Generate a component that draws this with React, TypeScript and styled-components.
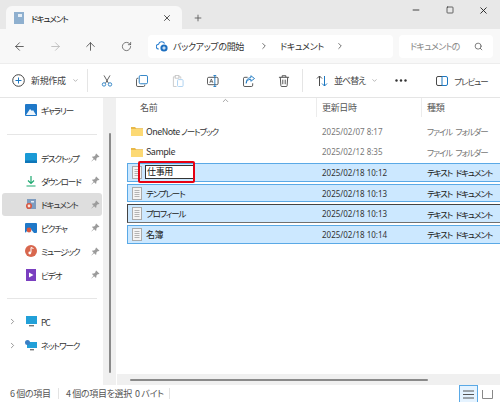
import React from 'react';
import styled, { createGlobalStyle, css } from 'styled-components';
import { ArrowLeft, ArrowRight, ArrowUp, RotateCw, X, Plus, Minus, Square, ChevronRight, ChevronDown, ChevronUp, Search } from 'lucide-react';

const GlobalStyle = createGlobalStyle`
  html, body { margin: 0; padding: 0; width: 500px; height: 402px; overflow: hidden; background: #fff; }
  body {
    font-family: "Noto Sans CJK JP", "Noto Sans", sans-serif;
    font-feature-settings: "palt";
    letter-spacing: -0.35px;
    font-size: 9px;
    color: #333;
    white-space: nowrap;
  }
  * { box-sizing: border-box; }
`;

// katakana in the reference is much narrower than in Noto
const narrow = css`
  font-size: 8.5px;
  letter-spacing: -1.1px;
  word-spacing: 2.5px;
`;

const Window = styled.div`
  width: 500px;
  height: 402px;
  display: flex;
  flex-direction: column;
  background: #fff;
`;

const TabBar = styled.div`
  height: 29px;
  background: #e8e8e8;
  padding: 6px 0 0 6px;
  display: flex;
  align-items: stretch;
  flex-shrink: 0;
`;

const Tab = styled.div`
  width: 176px;
  background: #f8f8f8;
  border-radius: 6px 6px 0 0;
  display: flex;
  align-items: center;
  padding: 0 10px 0 8px;
  color: #222;
`;

const TabIcon = styled.svg`
  width: 10px;
  height: 12px;
  margin-right: 7px;
`;

const TabTitle = styled.span`
  flex: 1;
  ${narrow}
`;

const NewTab = styled.div`
  width: 32px;
  display: flex;
  align-items: center;
  justify-content: center;
  color: #555;
`;

const WindowButtons = styled.div`
  margin-left: auto;
  display: flex;
  align-items: flex-start;
  margin-top: -6px;
`;

const WindowButton = styled.div`
  width: 33.5px;
  height: 20px;
  display: flex;
  align-items: center;
  justify-content: center;
  color: #222;
`;

const AddressRow = styled.div`
  height: 35px;
  background: #f8f8f8;
  display: flex;
  align-items: center;
  padding: 0 7px 0 2px;
  border-bottom: 1px solid #ededed;
  flex-shrink: 0;
`;

const NavButton = styled.div<{ $off?: boolean }>`
  width: 35.5px;
  display: flex;
  justify-content: center;
  color: ${({ $off }) => ($off ? '#b5b5b5' : '#444')};
`;

const AddressBox = styled.div`
  width: 245px;
  height: 23px;
  margin-left: 4px;
  background: #fff;
  border-radius: 4px;
  display: flex;
  align-items: center;
  padding-left: 8px;
  color: #333;
`;

const Crumb = styled.span<{ $left: number; $width: number }>`
  margin-left: ${({ $left }) => $left}px;
  width: ${({ $width }) => $width}px;
`;

const Sep = styled.span`
  display: flex;
  width: 10px;
  margin-left: 6px;
  color: #555;
`;

const SearchBox = styled.div`
  width: 94px;
  height: 23px;
  margin-left: 6px;
  background: #fff;
  border-radius: 4px;
  display: flex;
  align-items: center;
  justify-content: space-between;
  padding: 0 10px 0 11px;
  color: #888;
  letter-spacing: -0.7px;
`;

const Toolbar = styled.div`
  height: 34px;
  display: flex;
  align-items: center;
  border-bottom: 1px solid #e5e5e5;
  padding-left: 12px;
  color: #444;
  flex-shrink: 0;
`;

const NewButton = styled.div`
  width: 75px;
  display: flex;
  align-items: center;
  gap: 6px;
`;

const ToolText = styled.div<{ $left?: number }>`
  display: flex;
  align-items: center;
  gap: 6px;
  margin-left: ${({ $left }) => $left ?? 0}px;
`;

const SortLabel = styled.span`
  letter-spacing: -1px;
`;

const PreviewLabel = styled.span`
  ${narrow}
`;

const Divider = styled.div<{ $right?: number }>`
  width: 1px;
  height: 23px;
  background: #e5e5e5;
  margin-right: ${({ $right }) => $right ?? 0}px;
`;

const ToolIcon = styled.div`
  width: 35.5px;
  display: flex;
  justify-content: center;
  svg {
    width: 12px;
    height: 12px;
  }
`;

const Main = styled.div`
  flex: 1;
  display: flex;
  min-height: 0;
`;

const Sidebar = styled.div`
  width: 103px;
  padding: 0.5px 0 0 2px;
  display: flex;
  flex-direction: column;
  flex-shrink: 0;
`;

const NavItem = styled.div<{ $active?: boolean }>`
  height: 23.4px;
  flex-shrink: 0;
  display: flex;
  align-items: center;
  padding-left: 23px;
  margin-right: 1px;
  border-radius: 3px;
  background: ${({ $active }) => ($active ? '#dedede' : 'transparent')};
  color: #333;
`;

const NavIcon = styled.span`
  width: 12px;
  display: flex;
  justify-content: center;
`;

const NavLabel = styled.span`
  flex: 1;
  margin-left: 4px;
  ${narrow}
`;

const NavPin = styled.span`
  display: flex;
  margin-right: 2px;
`;

const NavChevron = styled.span`
  display: flex;
  width: 9px;
  margin: 0 8.5px 0 -17.5px;
  color: #777;
`;

const NavRule = styled.div<{ $top: number; $bottom: number }>`
  height: 1px;
  background: #e6e6e6;
  flex-shrink: 0;
  margin: ${({ $top }) => $top}px 6px ${({ $bottom }) => $bottom}px 5px;
`;

const NavTrack = styled.div`
  width: 13px;
  background: #f0f0f0;
  display: flex;
  justify-content: center;
  padding: 35px 0 12px;
  flex-shrink: 0;
`;

const NavThumb = styled.div`
  width: 2px;
  background: #8a8a8a;
  border-radius: 1px;
`;

const Content = styled.div`
  flex: 1;
  display: flex;
  flex-direction: column;
  min-width: 0;
  position: relative;
  padding-left: 11px;
`;

const HeaderRow = styled.div`
  height: 24px;
  display: flex;
  align-items: flex-start;
  color: #555;
  flex-shrink: 0;
`;

const HeaderCell = styled.div<{ $w: number; $pad: number; $last?: boolean }>`
  width: ${({ $w }) => $w}px;
  height: 19px;
  display: flex;
  align-items: center;
  padding-left: ${({ $pad }) => $pad}px;
  border-right: 1px solid ${({ $last }) => ($last ? 'transparent' : '#ececec')};
`;

const SortCaret = styled.div`
  position: absolute;
  top: -2px;
  left: 105px;
  color: #888;
  display: flex;
`;

const FileRow = styled.div<{ $sel?: boolean; $focus?: boolean }>`
  height: 18.6px;
  margin-bottom: 2px;
  flex-shrink: 0;
  display: flex;
  align-items: center;
  color: ${({ $sel }) => ($sel ? '#222' : '#333')};
  background: ${({ $sel }) => ($sel ? '#cce8ff' : 'transparent')};
  border: 1px solid ${({ $sel, $focus }) => ($focus ? '#444' : $sel ? '#5aa9e6' : 'transparent')};
  border-bottom-width: 1.5px;
  border-bottom-color: ${({ $sel, $focus }) => ($focus ? '#707070' : $sel ? '#5aa9e6' : 'transparent')};
  border-right: none;
`;

const NameCell = styled.div`
  width: 194px;
  display: flex;
  align-items: center;
  padding-left: 3px;
  gap: 3px;
`;

const FileName = styled.span`
  letter-spacing: -0.5px;
`;

const Kana = styled.span`
  ${narrow}
`;

const DateCell = styled.div<{ $dim?: boolean }>`
  width: 105px;
  font-size: 8px;
  letter-spacing: 0;
  font-family: "Noto Sans", sans-serif;
  color: ${({ $dim }) => ($dim ? '#777' : '#333')};
`;

const KindCell = styled.div<{ $dim?: boolean }>`
  ${narrow}
  color: ${({ $dim }) => ($dim ? '#777' : '#222')};
`;

const RenameBox = styled.div`
  width: 49px;
  height: 14px;
  margin-left: -1px;
  background: #fff;
  border: 1px solid #333;
  padding-left: 1px;
  line-height: 12px;
  color: #111;
`;

const Highlight = styled.div`
  position: absolute;
  top: 63px;
  left: 22px;
  width: 57px;
  height: 22px;
  border: 2.5px solid #e60012;
  border-radius: 2px;
`;

const HScroll = styled.div`
  margin-top: auto;
  height: 11px;
  margin-left: -10px;
  background: #f0f0f0;
  display: flex;
  align-items: center;
  flex-shrink: 0;
`;

const HThumb = styled.div`
  width: 298px;
  height: 2px;
  margin-left: 13px;
  background: #8a8a8a;
  border-radius: 1px;
`;

const StatusBar = styled.div`
  height: 17px;
  display: flex;
  align-items: center;
  padding-left: 10px;
  color: #555;
  flex-shrink: 0;
`;

const StatusRule = styled.div<{ $left: number; $right: number }>`
  width: 1px;
  height: 11px;
  background: #e3e3e3;
  margin: 0 ${({ $right }) => $right}px 0 ${({ $left }) => $left}px;
`;

const StatusText = styled.span<{ $width: number }>`
  width: ${({ $width }) => $width}px;
`;

const ViewButtons = styled.div`
  margin-left: auto;
  display: flex;
  align-items: center;
  height: 100%;
  padding-right: 3px;
`;

const ViewButton = styled.div<{ $on?: boolean }>`
  width: 19px;
  height: 100%;
  display: flex;
  align-items: center;
  justify-content: center;
  background: ${({ $on }) => ($on ? '#e5f3ff' : 'transparent')};
  border: 1px solid ${({ $on }) => ($on ? '#5aa9e6' : 'transparent')};
  border-bottom: none;
`;

const BLUE = '#1d78c1';
const GRAY = '#4a4a4a';

const FolderIcon = () => (
  <svg width="12" height="10" viewBox="0 0 12 10">
    <path d="M0 1h4l1.2 1.2H12V10H0z" fill="#e9b949" />
    <rect x="0" y="3" width="12" height="7" fill="#fcd974" />
  </svg>
);

const DocIcon = () => (
  <svg width="12" height="13" viewBox="0 0 12 13">
    <rect x="1.5" y="0.5" width="9" height="12" fill="#f4f4f4" stroke="#aaa" />
    <path d="M3.5 3.5h5M3.5 5.5h5M3.5 7.5h5M3.5 9.5h5" stroke="#b4b4b4" />
  </svg>
);

const PinIcon = () => (
  <svg width="9" height="9" viewBox="0 0 9 9">
    <path d="M5.2.5l3.3 3.3-1 .5-.6-.2-1.6 1.6.1 1.5-.7.6-1.6-1.6L.6 8.4l-.2-.2 2.2-2.5L1 4.1l.6-.7 1.5.1 1.6-1.6-.2-.6z" fill="#9b9b9b" />
  </svg>
);

const splitKana = (name: string) =>
  name.split(/([ァ-ヶー]+)/).map((part, i) => (i % 2 ? <Kana key={i}>{part}</Kana> : part));

const files = [
  { name: 'OneNote ノートブック', date: '2025/02/07 8:17', kind: 'ファイル フォルダー', folder: true },
  { name: 'Sample', date: '2025/02/12 8:35', kind: 'ファイル フォルダー', folder: true },
  { name: '仕事用', date: '2025/02/18 10:12', kind: 'テキスト ドキュメント', rename: true },
  { name: 'テンプレート', date: '2025/02/18 10:13', kind: 'テキスト ドキュメント' },
  { name: 'プロフィール', date: '2025/02/18 10:13', kind: 'テキスト ドキュメント', focus: true },
  { name: '名簿', date: '2025/02/18 10:14', kind: 'テキスト ドキュメント' },
];

const pinned: { label: string; icon: React.ReactNode; active?: boolean }[] = [
  {
    label: 'デスクトップ',
    icon: (
      <svg width="12" height="10" viewBox="0 0 12 10">
        <rect width="12" height="10" rx="1" fill="#1a9ad6" />
        <rect y="7.5" width="12" height="2.5" fill="#0f76b8" />
      </svg>
    ),
  },
  {
    label: 'ダウンロード',
    icon: (
      <svg width="12" height="12" viewBox="0 0 12 12" fill="none" stroke="#1fa971" strokeWidth="1.2">
        <path d="M6 1v7M3 5.5L6 8.5l3-3M1.5 11h9" />
      </svg>
    ),
  },
  {
    label: 'ドキュメント',
    active: true,
    icon: (
      <svg width="12" height="12" viewBox="0 0 12 12">
        <rect x="2" y="1" width="9" height="10" fill="#7e9cc0" />
        <circle cx="4" cy="8" r="3" fill="#d9573f" />
        <circle cx="4" cy="8" r="1.4" fill="#f4e4e0" />
        <rect x="6" y="3" width="3" height="1.5" fill="#e4edf6" />
      </svg>
    ),
  },
  {
    label: 'ピクチャ',
    icon: (
      <svg width="12" height="12" viewBox="0 0 12 12">
        <rect y="1" width="12" height="10" rx="1" fill="#1f78c8" />
        <path d="M0 11l5-5 4 5z" fill="#f2f6fa" />
        <circle cx="4" cy="8" r="2.4" fill="#d9573f" />
      </svg>
    ),
  },
  {
    label: 'ミュージック',
    icon: (
      <svg width="12" height="12" viewBox="0 0 12 12">
        <circle cx="6" cy="6" r="6" fill="#d8674e" />
        <path d="M6 2.5v5M6 2.5l2.5 1" stroke="#fff" fill="none" />
        <circle cx="4.8" cy="8" r="1.4" fill="#fff" />
      </svg>
    ),
  },
  {
    label: 'ビデオ',
    icon: (
      <svg width="10" height="12" viewBox="0 0 10 12">
        <rect width="10" height="12" fill="#7a3fc0" />
        <path d="M3 3.5l4.5 2.5L3 8.5z" fill="#fff" />
      </svg>
    ),
  },
];

export default function App() {
  return (
    <Window>
      <GlobalStyle />
      <TabBar>
        <Tab>
          <TabIcon viewBox="0 0 10 12">
            <rect width="10" height="12" fill="#8fb0cf" />
            <rect x="4" y="2" width="4" height="3" fill="#e5eef6" />
          </TabIcon>
          <TabTitle>ドキュメント</TabTitle>
          <X size={10} color="#333" />
        </Tab>
        <NewTab><Plus size={10} /></NewTab>
        <WindowButtons>
          <WindowButton><Minus size={10} /></WindowButton>
          <WindowButton><Square size={8} strokeWidth={2} /></WindowButton>
          <WindowButton><X size={11} /></WindowButton>
        </WindowButtons>
      </TabBar>
      <AddressRow>
        <NavButton><ArrowLeft size={13} strokeWidth={1.5} /></NavButton>
        <NavButton $off><ArrowRight size={13} strokeWidth={1.5} /></NavButton>
        <NavButton><ArrowUp size={13} strokeWidth={1.5} /></NavButton>
        <NavButton><RotateCw size={11} strokeWidth={1.5} /></NavButton>
        <AddressBox>
          <svg width="12" height="12" viewBox="0 0 12 12">
            <path d="M2.8 9a2.4 2.4 0 0 1-.2-4.8 3.2 3.2 0 0 1 6-.6" fill="none" stroke="#2a7fd0" strokeWidth="1.1" />
            <circle cx="8" cy="8" r="3.6" fill="#1d6fc0" />
            <path d="M8 6.3v3.4M6.3 8h3.4" stroke="#fff" />
          </svg>
          <Crumb $left={5} $width={80}>バックアップの開始</Crumb>
          <Sep><ChevronRight size={10} /></Sep>
          <Crumb $left={11} $width={49}>ドキュメント</Crumb>
          <Sep><ChevronRight size={10} /></Sep>
        </AddressBox>
        <SearchBox>
          <span>ドキュメントの</span>
          <Search size={9} color="#555" />
        </SearchBox>
      </AddressRow>
      <Toolbar>
        <NewButton>
          <svg width="13" height="13" viewBox="0 0 13 13" fill="none">
            <circle cx="6.5" cy="6.5" r="5.8" stroke="#444" />
            <path d="M6.5 3.5v6M3.5 6.5h6" stroke={BLUE} />
          </svg>
          <span>新規作成</span>
          <ChevronDown size={7} color="#888" />
        </NewButton>
        <Divider $right={1} />
        <ToolIcon>
          <svg viewBox="0 0 13 14" fill="none">
            <path d="M3 .5l5.2 9M10 .5L4.8 9.5" stroke={GRAY} />
            <circle cx="3" cy="11" r="2" stroke={BLUE} />
            <circle cx="10" cy="11" r="2" stroke={BLUE} />
          </svg>
        </ToolIcon>
        <ToolIcon>
          <svg viewBox="0 0 13 13" fill="none">
            <path d="M2.5 3.5H2A1.5 1.5 0 0 0 .5 5v6A1.5 1.5 0 0 0 2 12.5h6A1.5 1.5 0 0 0 9.5 11v-.5" stroke={GRAY} />
            <rect x="3.5" y="0.5" width="9" height="9" rx="1.5" stroke={BLUE} />
          </svg>
        </ToolIcon>
        <ToolIcon>
          <svg viewBox="0 0 13 13" fill="none">
            <path d="M4 2H1.5v10.5H5" stroke="#c8c8c8" />
            <path d="M7 2h2.5v2" stroke="#c8c8c8" />
            <rect x="3.5" y="0.5" width="4" height="3" stroke="#c8c8c8" />
            <rect x="6" y="5" width="6" height="7.5" rx="1" stroke="#a9cff0" />
          </svg>
        </ToolIcon>
        <ToolIcon>
          <svg viewBox="0 0 13 13" fill="none">
            <rect x="0.5" y="2.5" width="11.5" height="8" rx="1.5" stroke={GRAY} />
            <path d="M3 8.5l1.7-4.2 1.7 4.2M3.6 7.2h2.2" stroke={GRAY} strokeWidth="0.8" />
            <path d="M8.5 .5v12M7 .5h3M7 12.5h3" stroke={BLUE} />
          </svg>
        </ToolIcon>
        <ToolIcon>
          <svg viewBox="0 0 13 13" fill="none">
            <path d="M5 2.5H2A1.5 1.5 0 0 0 .5 4v7A1.5 1.5 0 0 0 2 12.5h7a1.5 1.5 0 0 0 1.5-1.5V9" stroke={GRAY} />
            <path d="M3.5 9c.3-2.8 2-4.3 5-4.3V6.8L12.5 3.8 8.5.8v2C5 3 3.5 5.5 3.5 9z" stroke={BLUE} />
          </svg>
        </ToolIcon>
        <ToolIcon>
          <svg viewBox="0 0 12 13" fill="none" stroke={GRAY}>
            <path d="M.5 2.5h11M4 2.5V.8h4v1.7M2 2.5l.6 9a1 1 0 0 0 1 1h4.8a1 1 0 0 0 1-1l.6-9M4.7 5v5M7.3 5v5" />
          </svg>
        </ToolIcon>
        <Divider $right={13} />
        <ToolText>
          <svg width="12" height="12" viewBox="0 0 12 12" fill="none">
            <path d="M3.5 11V1M1 3.5L3.5 1 6 3.5" stroke={GRAY} />
            <path d="M8.5 1v10M6 8.5L8.5 11 11 8.5" stroke={BLUE} />
          </svg>
          <SortLabel>並べ替え</SortLabel>
          <ChevronDown size={7} color="#888" />
        </ToolText>
        <ToolText $left={17}>
          <svg width="12" height="3" viewBox="0 0 12 3" fill="#333">
            <circle cx="1.5" cy="1.5" r="1.2" />
            <circle cx="6" cy="1.5" r="1.2" />
            <circle cx="10.5" cy="1.5" r="1.2" />
          </svg>
        </ToolText>
        <ToolText $left={29}>
          <svg width="12" height="10" viewBox="0 0 12 10" fill="none">
            <path d="M6 .5H2A1.5 1.5 0 0 0 .5 2v6A1.5 1.5 0 0 0 2 9.5h4" stroke={GRAY} />
            <path d="M6 .5h4A1.5 1.5 0 0 1 11.5 2v6A1.5 1.5 0 0 1 10 9.5H6z" stroke={BLUE} />
          </svg>
          <PreviewLabel>プレビュー</PreviewLabel>
        </ToolText>
      </Toolbar>
      <Main>
        <Sidebar>
          <NavItem>
            <NavIcon>
              <svg width="12" height="12" viewBox="0 0 12 12">
                <rect width="12" height="12" rx="1" fill="#1f78c8" />
                <path d="M1 11l4-6 2 2 1-1 3 5z" fill="#eef5fb" />
              </svg>
            </NavIcon>
            <NavLabel>ギャラリー</NavLabel>
          </NavItem>
          <NavRule $top={12} $bottom={11} />
          {pinned.map((item) => (
            <NavItem key={item.label} $active={item.active}>
              <NavIcon>{item.icon}</NavIcon>
              <NavLabel>{item.label}</NavLabel>
              <NavPin><PinIcon /></NavPin>
            </NavItem>
          ))}
          <NavRule $top={12} $bottom={11} />
          <NavItem>
            <NavChevron><ChevronRight size={9} /></NavChevron>
            <NavIcon>
              <svg width="11" height="11" viewBox="0 0 11 11">
                <rect width="11" height="8" fill="#22a0d8" />
                <rect x="3" y="9" width="5" height="1.4" fill="#777" />
              </svg>
            </NavIcon>
            <NavLabel>PC</NavLabel>
          </NavItem>
          <NavItem>
            <NavChevron><ChevronRight size={9} /></NavChevron>
            <NavIcon>
              <svg width="12" height="11" viewBox="0 0 12 11">
                <rect x="2" y="2" width="10" height="6" fill="#22a0d8" />
                <circle cx="2.5" cy="2.5" r="2.5" fill="#3b7fc4" />
                <rect x="5" y="9" width="4" height="1.4" fill="#777" />
              </svg>
            </NavIcon>
            <NavLabel>ネットワーク</NavLabel>
          </NavItem>
        </Sidebar>
        <NavTrack><NavThumb /></NavTrack>
        <Content>
          <HeaderRow>
            <HeaderCell $w={190} $pad={13}>名前</HeaderCell>
            <HeaderCell $w={105} $pad={5}>更新日時</HeaderCell>
            <HeaderCell $w={70} $pad={5} $last>種類</HeaderCell>
          </HeaderRow>
          <SortCaret><ChevronUp size={9} /></SortCaret>
          {files.map((f) => {
            const sel = !f.folder;
            return (
              <FileRow key={f.name} $sel={sel} $focus={f.focus}>
                <NameCell>
                  {f.folder ? <FolderIcon /> : <DocIcon />}
                  {f.rename ? <RenameBox>{f.name}</RenameBox> : <FileName>{splitKana(f.name)}</FileName>}
                </NameCell>
                <DateCell $dim={!sel}>{f.date}</DateCell>
                <KindCell $dim={!sel}>{f.kind}</KindCell>
              </FileRow>
            );
          })}
          <Highlight />
          <HScroll><HThumb /></HScroll>
        </Content>
      </Main>
      <StatusBar>
        <StatusText $width={40}>6 個の項目</StatusText>
        <StatusRule $left={8} $right={7} />
        <StatusText $width={69}>4 個の項目を選択</StatusText>
        <StatusText $width={34}>0 バイト</StatusText>
        <StatusRule $left={0} $right={0} />
        <ViewButtons>
          <ViewButton $on>
            <svg width="11" height="9" viewBox="0 0 11 9"><path d="M0 1h11M0 4.5h11M0 8h11" stroke="#555" /></svg>
          </ViewButton>
          <ViewButton>
            <svg width="11" height="9" viewBox="0 0 11 9" fill="none"><path d="M.5 0v8.5h10V0" stroke="#888" /></svg>
          </ViewButton>
        </ViewButtons>
      </StatusBar>
    </Window>
  );
}
